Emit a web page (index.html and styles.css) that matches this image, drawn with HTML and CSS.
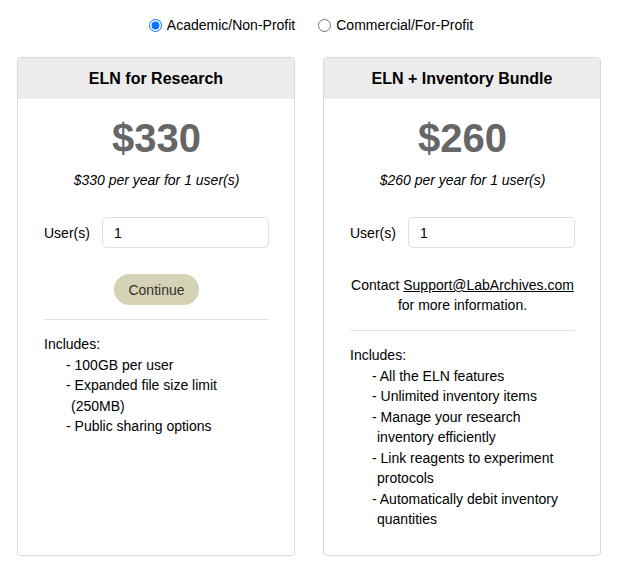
FILE: index.html
```html
<!DOCTYPE html>
<html>
<head>
    <title>LabArchives Pricing</title>
    <meta name="viewport" content="width=device-width, initial-scale=1">
    <link rel="stylesheet" href="styles.css">
</head>
<body>
    <div id="pricing">
        <div class="audience">
            <label class="choice"><input type="radio" name="audience" checked> Academic/Non-Profit</label>
            <label class="choice"><input type="radio" name="audience"> Commercial/For-Profit</label>
        </div>

        <div class="plans">
            <div class="plan">
                <div class="plan-title">ELN for Research</div>
                <div class="plan-body">
                    <div class="price">$330</div>
                    <div class="price-note">$330 per year for 1 user(s)</div>
                    <div class="users">
                        <span>User(s)</span>
                        <input type="text" class="users-input" value="1">
                    </div>
                    <div class="action">
                        <button class="continue">Continue</button>
                    </div>
                    <div class="features">
                        Includes:
                        <ul>
                            <li>- 100GB per user</li>
                            <li>- Expanded file size limit (250MB)</li>
                            <li>- Public sharing options</li>
                        </ul>
                    </div>
                </div>
            </div>

            <div class="plan">
                <div class="plan-title">ELN + Inventory Bundle</div>
                <div class="plan-body">
                    <div class="price">$260</div>
                    <div class="price-note">$260 per year for 1 user(s)</div>
                    <div class="users">
                        <span>User(s)</span>
                        <input type="text" class="users-input" value="1">
                    </div>
                    <div class="contact">
                        Contact <a href="#">Support@LabArchives.com</a><br>
                        for more information.
                    </div>
                    <div class="features">
                        Includes:
                        <ul>
                            <li>- All the ELN features</li>
                            <li>- Unlimited inventory items</li>
                            <li>- Manage your research inventory efficiently</li>
                            <li>- Link reagents to experiment protocols</li>
                            <li>- Automatically debit inventory quantities</li>
                        </ul>
                    </div>
                </div>
            </div>
        </div>
    </div>
</body>
</html>
```

FILE: styles.css
```css
body {
    font-family: "Liberation Sans", Arial, sans-serif;
    font-size: 14px;
    color: #000;
    background-color: #fff;
    margin: 0;
    padding: 0;
}

#pricing {
    padding: 16px 19px 0 17px;
}

.audience {
    display: flex;
    justify-content: center;
    gap: 18px;
    height: 18px;
    align-items: center;
}

.choice {
    display: flex;
    align-items: center;
    gap: 5px;
}

.choice input {
    margin: 0 0 0 5px;
    width: 13px;
    height: 13px;
}

.plans {
    display: grid;
    grid-template-columns: 278px 278px;
    gap: 28px;
    margin-top: 23px;
}

.plan {
    border: 1px solid #d9d9d9;
    border-radius: 4px;
    overflow: hidden;
    height: 499px;
    box-sizing: border-box;
}

.plan-title {
    background-color: #ececec;
    height: 41px;
    line-height: 41px;
    text-align: center;
    font-size: 16px;
    font-weight: bold;
}

.plan-body {
    padding: 0 25px 0 26px;
}

.price {
    font-size: 40px;
    font-weight: bold;
    color: #666;
    text-align: center;
    margin-top: 16px;
    line-height: 46px;
}

.price-note {
    font-style: italic;
    text-align: center;
    margin-top: 11px;
}

.users {
    display: flex;
    align-items: center;
    gap: 12px;
    margin-top: 29px;
}

.users-input {
    flex: 1;
    min-width: 0;
    width: 0;
    height: 31px;
    box-sizing: border-box;
    border: 1px solid #dedede;
    border-radius: 5px;
    padding: 0 11px;
    font-family: inherit;
    font-size: 14px;
}

.action {
    text-align: center;
    margin-top: 26px;
    padding-bottom: 14px;
    border-bottom: 1px solid #e2e2e2;
}

.continue {
    background-color: #d6d2b5;
    color: #333;
    border: none;
    border-radius: 16px;
    height: 31px;
    padding: 0 14px;
    font-family: inherit;
    font-size: 14px;
    cursor: pointer;
}

.contact {
    text-align: center;
    line-height: 20px;
    margin-top: 27px;
    padding-bottom: 15px;
    border-bottom: 1px solid #e2e2e2;
}

.contact a {
    color: #000;
}

.features {
    margin-top: 14px;
    line-height: 20.5px;
}

.features ul {
    list-style: none;
    margin: 0;
    padding: 0 0 0 22px;
}

.features li {
    padding-left: 5px;
    text-indent: -5px;
}
```
